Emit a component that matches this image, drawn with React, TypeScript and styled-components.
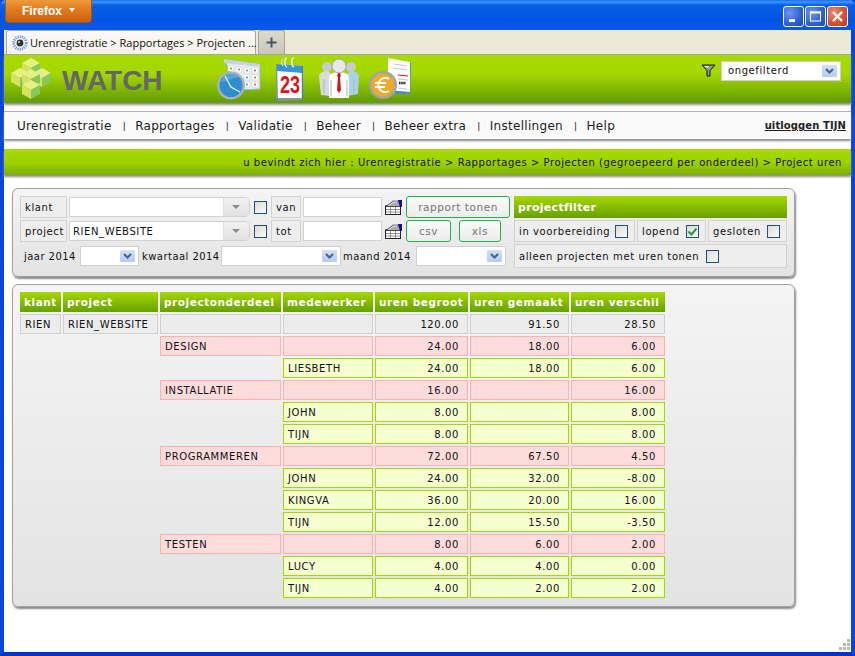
import React from 'react';
import styled, { createGlobalStyle } from 'styled-components';

const GlobalStyle = createGlobalStyle`
  html, body { margin: 0; padding: 0; height: 100%; overflow: hidden; background: #fff; }
  #root { height: 100%; }
  * { box-sizing: border-box; }
`;

const Window = styled.div`
  height: 656px;
  width: 855px;
  display: flex;
  flex-direction: column;
  border-left: 4px solid #0a45dc;
  border-right: 4px solid #0a45dc;
  border-bottom: 4px solid #0433c8;
  background: #fff;
  font-family: "DejaVu Sans", Verdana, sans-serif;
  color: #111;
  position: relative;
`;

const TitleBar = styled.div`
  height: 30px;
  margin: 0 -4px;
  flex: none;
  background: linear-gradient(#1a6cf0 0, #3d95ff 2px, #0a5fe8 5px, #0054e3 20px, #0a58e6 30px);
  border-radius: 6px 6px 0 0;
  display: flex;
  justify-content: space-between;
  padding: 0 7px 0 5px;
`;

const FirefoxButton = styled.div`
  width: 87px;
  height: 23px;
  background: linear-gradient(#f09a3a, #e27a1c 45%, #c9620f);
  border: 1px solid #a8550f;
  border-top: none;
  border-radius: 0 0 4px 4px;
  color: #fff;
  font: bold 12px "Liberation Sans", Arial, sans-serif;
  display: flex;
  align-items: center;
  justify-content: center;
  gap: 7px;
  padding-bottom: 1px;
  &::after {
    content: '';
    border: 3.5px solid transparent;
    border-top: 4px solid #fff;
    border-bottom: none;
    margin-top: -1px;
  }
`;

const WinButtons = styled.div`
  display: flex;
  gap: 1px;
  padding-top: 6px;
`;

const WinButton = styled.div<{ $close?: boolean }>`
  width: 21px;
  height: 21px;
  border: 1px solid #fff;
  border-radius: 3px;
  background: ${(p) =>
    p.$close
      ? 'radial-gradient(circle at 30% 30%, #e98a6f, #d4502e 60%, #bd3a17)'
      : 'radial-gradient(circle at 30% 30%, #6f96f0, #2d5fdc 60%, #1b46c6)'};
  display: flex;
  align-items: center;
  justify-content: center;
`;

const TabStrip = styled.div`
  height: 25px;
  flex: none;
  background: #ece9d8;
  display: flex;
  align-items: flex-end;
  padding-left: 2px;
  gap: 2px;
  border-bottom: 1px solid #a8a69c;
`;

const Tab = styled.div`
  width: 250px;
  height: 24px;
  background: linear-gradient(#fbfaf6, #f3f1e8);
  border: 1px solid #a8a69c;
  border-bottom: none;
  border-radius: 3px 3px 0 0;
  display: flex;
  align-items: center;
  gap: 2px;
  padding-left: 5px;
  font: 11px "Open Sans", "Liberation Sans", sans-serif;
  white-space: nowrap;
  svg { flex: none; }
`;

const NewTab = styled.div`
  width: 27px;
  height: 24px;
  background: linear-gradient(#dcdad0, #c9c7bc);
  border: 1px solid #a8a69c;
  border-bottom: none;
  border-radius: 3px 3px 0 0;
  display: flex;
  align-items: center;
  justify-content: center;
`;

const Header = styled.div`
  height: 48px;
  flex: none;
  background: linear-gradient(#a7da00 0, #a4d600 40%, #66a000 95%);
  box-shadow: 0 2px 2px #8d8d8d;
  display: flex;
  align-items: center;
  position: relative;
  padding-left: 6px;
`;

const LogoText = styled.div`
  font: bold 28px "Liberation Sans", Arial, sans-serif;
  color: #63666a;
  margin: 3px 0 0 10px;
  width: 100px;
  flex: none;
`;

const AppIcons = styled.div`
  display: flex;
  align-items: center;
  margin-left: 55px;
  gap: 14px;
`;

const PeopleSlot = styled.span`
  margin-left: 1px;
  margin-right: -5px;
  display: inline-flex;
`;

const FilterBox = styled.div`
  margin-left: auto;
  margin-right: 10px;
  margin-top: -17px;
  display: flex;
  align-items: center;
  gap: 5px;
`;

const Select = styled.div<{ $w: number; $mr?: number }>`
  width: ${(p) => p.$w}px;
  height: 20px;
  margin-right: ${(p) => p.$mr ?? 0}px;
  border: 1px solid #d0d0d0;
  background: #fff;
  display: flex;
  align-items: center;
  justify-content: space-between;
  padding: 0 3px 0 6px;
  font-size: 10px;
  letter-spacing: 0.6px;
  flex: none;
`;

const SelectArrow = styled.span`
  width: 15px;
  height: 12px;
  background: linear-gradient(#d3e0fa, #b6caf2);
  border-radius: 1px;
  display: flex;
  align-items: center;
  justify-content: center;
`;

const NavBar = styled.div`
  height: 28px;
  flex: none;
  margin-top: 8px;
  background: #fafafa;
  border-top: 1px solid #b0b0b0;
  box-shadow: 0 2px 2px #8d8d8d;
  display: flex;
  align-items: center;
  padding: 0 5px 0 13px;
  font-size: 12px;
`;

const NavItem = styled.a`
  color: #1a1a1a;
  white-space: nowrap;
  letter-spacing: 0.3px;
`;

const NavSep = styled.span`
  font-size: 9px;
  margin: 1px 9.5px 0 11px;
`;

const Logout = styled.a`
  margin-left: auto;
  font-size: 10px;
  font-weight: bold;
  letter-spacing: 0.1px;
  text-decoration: underline;
  color: #222;
`;

const Crumb = styled.div`
  height: 26px;
  flex: none;
  margin-top: 10px;
  background: linear-gradient(#a6d800, #a0d200 50%, #7cb000);
  box-shadow: 0 2px 2px #8d8d8d;
  font-size: 10px;
  letter-spacing: 0.55px;
  display: flex;
  align-items: center;
  justify-content: flex-end;
  padding-right: 9px;
`;

const Panel = styled.div<{ $h: number; $top: number }>`
  width: 783px;
  height: ${(p) => p.$h}px;
  margin: ${(p) => p.$top}px 0 0 8px;
  flex: none;
  border: 1px solid #a0a0a0;
  border-radius: 6px;
  background: linear-gradient(#f4f4f4, #e3e3e3);
  box-shadow: 1px 2px 2px #8a8a8a;
  padding: 7px;
  font-size: 10px;
  letter-spacing: 0.6px;
`;

const FilterLayout = styled.div`
  display: flex;
  gap: 4px;
`;

const FilterLeft = styled.div`
  width: 490px;
  display: flex;
  flex-direction: column;
  gap: 2px;
`;

const FilterRow = styled.div`
  height: 22px;
  display: flex;
  align-items: center;
`;

const YearRow = styled(FilterRow)`
  height: 20px;
  margin-top: 2px;
  padding-left: 4px;
  white-space: nowrap;
`;

const YearLabel = styled.span<{ $w: number }>`
  width: ${(p) => p.$w}px;
  flex: none;
  letter-spacing: 0.45px;
`;

const FieldLabel = styled.div<{ $w: number }>`
  width: ${(p) => p.$w}px;
  height: 22px;
  flex: none;
  border: 1px solid #d2d2d2;
  background: #eeeeee;
  display: flex;
  align-items: center;
  padding-left: 4px;
  margin-right: 2px;
`;

const Combo = styled.div`
  width: 181px;
  height: 20px;
  flex: none;
  border: 1px solid #d2d2d2;
  border-radius: 0 5px 5px 0;
  background: #fff;
  display: flex;
  align-items: center;
  padding-left: 3px;
  position: relative;
  &::after {
    content: '';
    position: absolute;
    right: 0;
    top: 0;
    bottom: 0;
    width: 25px;
    background: linear-gradient(#f0f0f0, #e2e2e2);
    border-left: 1px solid #dcdcdc;
    border-radius: 0 4px 4px 0;
  }
  &::before {
    content: '';
    position: absolute;
    right: 9px;
    top: 7px;
    border: 4px solid transparent;
    border-top: 4px solid #8c8c8c;
    border-bottom: none;
    z-index: 1;
  }
`;

const CheckBox = styled.span<{ $ml?: number; $mr?: number }>`
  width: 13px;
  height: 13px;
  flex: none;
  border: 1px solid #1c5180;
  background: linear-gradient(135deg, #dcdcd6, #fbfbf8);
  margin-left: ${(p) => p.$ml ?? 0}px;
  margin-right: ${(p) => p.$mr ?? 0}px;
  display: inline-flex;
  align-items: center;
  justify-content: center;
`;

const DateInput = styled.div`
  width: 79px;
  height: 20px;
  flex: none;
  border: 1px solid #d2d2d2;
  background: #fff;
`;

const CalendarSlot = styled.span`
  margin: 0 4px 0 3px;
  display: inline-flex;
  flex: none;
`;

const ActionButton = styled.div<{ $w: number; $mr?: number }>`
  width: ${(p) => p.$w}px;
  height: 22px;
  flex: none;
  margin-right: ${(p) => p.$mr ?? 0}px;
  border: 1px solid #22b14c;
  border-radius: 3px;
  background: linear-gradient(#fbfbfb, #ececec);
  color: #777;
  display: flex;
  align-items: center;
  justify-content: center;
  font-size: 10.5px;
  letter-spacing: 0.55px;
`;

const FilterRight = styled.div`
  width: 273px;
  display: flex;
  flex-direction: column;
  gap: 2px;
`;

const FilterTitle = styled.div`
  height: 22px;
  background: linear-gradient(#a6d800, #66a000);
  color: #fff;
  font-weight: bold;
  font-size: 11px;
  letter-spacing: 0.3px;
  display: flex;
  align-items: center;
  padding-left: 4px;
`;

const StatusRow = styled.div`
  display: flex;
  gap: 2px;
`;

const StatusCell = styled.div<{ $w: number; $h?: number }>`
  width: ${(p) => p.$w}px;
  height: ${(p) => p.$h ?? 22}px;
  border: 1px solid #d2d2d2;
  background: #eeeeee;
  display: flex;
  align-items: center;
  justify-content: space-between;
  padding: 0 6px 0 4px;
  white-space: nowrap;
`;

const OnlyHours = styled(StatusCell)`
  justify-content: flex-start;
  gap: 7px;
`;

const ReportTable = styled.table`
  border-collapse: separate;
  border-spacing: 2px;
  table-layout: fixed;
  width: 649px;
  margin: -2px 0 0 -2px;
`;

const Col = styled.col<{ $w: number }>`
  width: ${(p) => p.$w}px;
`;

const HeadCell = styled.th`
  height: 20px;
  padding: 0 4px;
  background: linear-gradient(#a6d800, #66a000);
  color: #fff;
  font-weight: bold;
  font-size: 10.5px;
  text-align: left;
  letter-spacing: 0.55px;
  white-space: nowrap;
  overflow: hidden;
`;

const palette = {
  sum: { bg: '#ececec', line: '#d0d0d0' },
  group: { bg: '#ffdcdc', line: '#ffb0b0' },
  item: { bg: '#f5ffd0', line: '#a6d800' },
};

const Cell = styled.td<{ $kind?: keyof typeof palette; $num?: boolean }>`
  height: 20px;
  padding: 0 ${(p) => (p.$num ? '8px' : '4px')} 0 4px;
  background: ${(p) => (p.$kind ? palette[p.$kind].bg : 'transparent')};
  border: ${(p) => (p.$kind ? `1px solid ${palette[p.$kind].line}` : 'none')};
  text-align: ${(p) => (p.$num ? 'right' : 'left')};
  white-space: nowrap;
`;

const ResizeGrip = styled.svg`
  position: absolute;
  right: 1px;
  bottom: 2px;
`;

const columns = [41, 95, 121, 90, 93, 99, 94];
const headings = ['klant', 'project', 'projectonderdeel', 'medewerker', 'uren begroot', 'uren gemaakt', 'uren verschil'];

type Row = { kind: 'group' | 'item'; group?: string; person?: string; a: string; b: string; c: string };

const rows: Row[] = [
  { kind: 'group', group: 'DESIGN', a: '24.00', b: '18.00', c: '6.00' },
  { kind: 'item', person: 'LIESBETH', a: '24.00', b: '18.00', c: '6.00' },
  { kind: 'group', group: 'INSTALLATIE', a: '16.00', b: '', c: '16.00' },
  { kind: 'item', person: 'JOHN', a: '8.00', b: '', c: '8.00' },
  { kind: 'item', person: 'TIJN', a: '8.00', b: '', c: '8.00' },
  { kind: 'group', group: 'PROGRAMMEREN', a: '72.00', b: '67.50', c: '4.50' },
  { kind: 'item', person: 'JOHN', a: '24.00', b: '32.00', c: '-8.00' },
  { kind: 'item', person: 'KINGVA', a: '36.00', b: '20.00', c: '16.00' },
  { kind: 'item', person: 'TIJN', a: '12.00', b: '15.50', c: '-3.50' },
  { kind: 'group', group: 'TESTEN', a: '8.00', b: '6.00', c: '2.00' },
  { kind: 'item', person: 'LUCY', a: '4.00', b: '4.00', c: '0.00' },
  { kind: 'item', person: 'TIJN', a: '4.00', b: '2.00', c: '2.00' },
];

const ChevronDown = () => (
  <svg width="9" height="6" viewBox="0 0 9 6">
    <path d="M1 1l3.5 3.5L8 1" fill="none" stroke="#4d6185" strokeWidth="2" />
  </svg>
);

const CalendarIcon = () => (
  <svg width="17" height="15" viewBox="0 0 17 15">
    <rect x="0.5" y="6.5" width="15" height="8" fill="#fff" stroke="#222" />
    <path d="M1 9.5h14M1 12h14M5.5 7v7M10.5 7v7" stroke="#777" strokeWidth="0.8" />
    <path d="M1 6.5L8 1h5l3 5.5z" fill="#a8a8a8" stroke="#444" strokeWidth="0.7" />
    <path d="M4 5.5l5-3.5h3" fill="none" stroke="#e4e4e4" />
    <path d="M13 0h4v7h-2z" fill="#10108a" />
    <path d="M0 5.5h3L1 7H0z" fill="#10108a" />
  </svg>
);

// back to front, so the lower cubes overlap the upper ones
const logoCubes = [
  [20, 5], [9, 15], [31, 15], [20, 16], [20, 27],
];

const Logo = () => (
  <svg width="42" height="42" viewBox="0 0 40 42">
    {logoCubes.map(([x, y]) => (
      <g key={`${x}-${y}`}>
        <path d={`M${x - 9} ${y}l9-5 9 5-9 5z`} fill="#e7f086" />
        <path d={`M${x - 9} ${y}v9l9 5v-9z`} fill="#d3e45e" />
        <path d={`M${x + 9} ${y}v9l-9 5v-9z`} fill="#86c95a" />
      </g>
    ))}
  </svg>
);

const ClockIcon = () => (
  <svg width="44" height="42" viewBox="0 0 44 42">
    <path d="M7 1l36 5v25l-22 1z" fill="#e9eef0" stroke="#8fb8d0" strokeWidth="1" />
    <path d="M7 1l36 5v3L7 5z" fill="#c9d3d8" />
    <g fill="#fff" stroke="#c4ced3" strokeWidth="0.5">
      <rect x="11" y="8" width="6" height="5" /><rect x="19" y="9" width="6" height="5" />
      <rect x="27" y="10" width="6" height="5" /><rect x="35" y="10" width="6" height="5" />
      <rect x="27" y="17" width="6" height="5" /><rect x="35" y="17" width="6" height="5" />
      <rect x="27" y="24" width="6" height="5" /><rect x="35" y="24" width="6" height="5" />
    </g>
    <g fill="#3aa655"><circle cx="14" cy="10.5" r="1" /><circle cx="22" cy="11.5" r="1" /><circle cx="30" cy="12.5" r="1" /><circle cx="30" cy="19.5" r="1" /><circle cx="30" cy="26.5" r="1" /></g>
    <g fill="#d94a4a"><circle cx="38" cy="12.5" r="1" /><circle cx="38" cy="19.5" r="1" /><circle cx="38" cy="26.5" r="1" /></g>
    <circle cx="14" cy="27.5" r="14" fill="#a9b2b7" />
    <circle cx="14" cy="27.5" r="11.5" fill="#2d8ed0" />
    <path d="M4 24a11 11 0 0 1 18-5z" fill="#4fa8e0" />
    <path d="M8 18l6 11 9 5" fill="none" stroke="#f2f7fa" strokeWidth="1.2" />
  </svg>
);

const DateIcon = () => (
  <svg width="29" height="44" viewBox="0 0 29 44">
    <path d="M1 7l27 2-1 34-22 1-4-2z" fill="#7f95a6" />
    <path d="M2 7l26 2v32L3 41z" fill="#fff" />
    <path d="M2 7l26 2v7L2 14z" fill="#3a92d8" />
    <path d="M28 9v32h-1.2V9z" fill="#2f86c8" />
    <path d="M12 1c-3 0-3 8 0 9M19 1c-3 0-3 8 0 9" fill="none" stroke="#e8f2f8" strokeWidth="1.4" />
    <path d="M8 2c-2 1-2 5 0 7" fill="none" stroke="#e8f2f8" strokeWidth="1" />
    <text transform="translate(15 36) scale(1 1.3)" textAnchor="middle" fontFamily="'Liberation Sans', Arial, sans-serif" fontWeight="bold" fontSize="18" fill="#d9141a">23</text>
  </svg>
);

const PeopleIcon = () => (
  <svg width="40" height="42" viewBox="0 0 40 42">
    <circle cx="8" cy="9" r="5" fill="#c9ccce" />
    <circle cx="32" cy="9" r="5" fill="#c9ccce" />
    <path d="M0 18c1-4 5-5 9-5l3 3v22l-10-1z" fill="#d8dbdd" />
    <path d="M40 18c-1-4-5-5-9-5l-3 3v22l11-2z" fill="#a9d2ea" />
    <path d="M10 20c0-4 5-6 10-6s10 2 10 6v20H10z" fill="#fff" />
    <circle cx="20" cy="8" r="7" fill="#e6e8ea" stroke="#a5a8aa" strokeWidth="1" />
    <path d="M19 15h2l1 3-1 1 1 13-2 3-2-3 1-13-1-1z" fill="#d8141a" />
    <path d="M5 21v15M35 21v15M12 22v16M28 22v16" stroke="#b0b4b6" strokeWidth="1" />
  </svg>
);

const EuroIcon = () => (
  <svg width="44" height="42" viewBox="0 0 44 42">
    <path d="M21 1l22 4-1 31-22-1z" fill="#3a92c8" />
    <path d="M20 0l22 4v30l-22-2z" fill="#fff" />
    <path d="M26 6l13 2M25 10l14 2M30 21l10 1M30 30l9 1" stroke="#c3c6c8" strokeWidth="1" />
    <path d="M30 17l10 1" stroke="#d8141a" strokeWidth="1" />
    <path d="M31 25h7" stroke="#222" strokeWidth="2.5" strokeDasharray="1.5 .7" />
    <circle cx="15" cy="27" r="14" fill="#9fa5a8" />
    <circle cx="15" cy="27" r="11.5" fill="#efa92d" />
    <path d="M21 21a7 7 0 1 0 0 12M7 25h11M7 29h10" fill="none" stroke="#fff" strokeWidth="2" />
  </svg>
);

const Favicon = () => (
  <svg width="16" height="16" viewBox="0 0 16 16">
    <rect width="16" height="16" fill="#f3f5fb" />
    <circle cx="8" cy="8" r="6.3" fill="none" stroke="#6d9ad8" strokeWidth="2.8" strokeDasharray="1.2 1" />
    <circle cx="8" cy="8" r="3.4" fill="#333" />
    <circle cx="7" cy="7" r="1" fill="#ddd" />
  </svg>
);

const Funnel = () => (
  <svg width="15" height="13" viewBox="0 0 15 13">
    <path d="M1 1h13L9 6.5V12H6V6.5z" fill="#9a9a9a" stroke="#111" strokeWidth="1" />
    <path d="M3 2h5L6.5 4z" fill="#e8e8e8" />
  </svg>
);

const Tick = () => (
  <svg width="11" height="9" viewBox="0 0 11 9">
    <path d="M1.5 4.5l3 3 5-6" fill="none" stroke="#1f9e3a" strokeWidth="2" />
  </svg>
);

const navItems = ['Urenregistratie', 'Rapportages', 'Validatie', 'Beheer', 'Beheer extra', 'Instellingen', 'Help'];

const App = () => (
  <Window>
    <GlobalStyle />
    <TitleBar>
      <FirefoxButton>Firefox</FirefoxButton>
      <WinButtons>
        <WinButton>
          <svg width="13" height="13" viewBox="0 0 13 13"><rect x="2" y="9" width="6" height="3" fill="#fff" /></svg>
        </WinButton>
        <WinButton>
          <svg width="13" height="13" viewBox="0 0 13 13"><rect x="1.5" y="2" width="10" height="9" fill="none" stroke="#fff" /><rect x="1" y="1.5" width="11" height="2" fill="#fff" /></svg>
        </WinButton>
        <WinButton $close>
          <svg width="13" height="13" viewBox="0 0 13 13"><path d="M2 2l9 9M11 2l-9 9" stroke="#fff" strokeWidth="2.4" /></svg>
        </WinButton>
      </WinButtons>
    </TitleBar>
    <TabStrip>
      <Tab>
        <Favicon />
        Urenregistratie &gt; Rapportages &gt; Projecten ...
      </Tab>
      <NewTab>
        <svg width="13" height="13" viewBox="0 0 13 13"><path d="M6.5 1.5v10M1.5 6.5h10" stroke="#4a5560" strokeWidth="2" /></svg>
      </NewTab>
    </TabStrip>
    <Header>
      <Logo />
      <LogoText>WATCH</LogoText>
      <AppIcons>
        <ClockIcon />
        <DateIcon />
        <PeopleSlot><PeopleIcon /></PeopleSlot>
        <EuroIcon />
      </AppIcons>
      <FilterBox>
        <Funnel />
        <Select $w={120}>
          ongefilterd
          <SelectArrow><ChevronDown /></SelectArrow>
        </Select>
      </FilterBox>
    </Header>
    <NavBar>
      {navItems.map((item, i) => (
        <React.Fragment key={item}>
          {i > 0 && <NavSep>|</NavSep>}
          <NavItem>{item}</NavItem>
        </React.Fragment>
      ))}
      <Logout>uitloggen TIJN</Logout>
    </NavBar>
    <Crumb>u bevindt zich hier : Urenregistratie &gt; Rapportages &gt; Projecten (gegroepeerd per onderdeel) &gt; Project uren</Crumb>

    <Panel $h={89} $top={13}>
      <FilterLayout>
        <FilterLeft>
          <FilterRow>
            <FieldLabel $w={47}>klant</FieldLabel>
            <Combo />
            <CheckBox $ml={4} $mr={4} />
            <FieldLabel $w={30}>van</FieldLabel>
            <DateInput />
            <CalendarSlot><CalendarIcon /></CalendarSlot>
            <ActionButton $w={104}>rapport tonen</ActionButton>
          </FilterRow>
          <FilterRow>
            <FieldLabel $w={47}>project</FieldLabel>
            <Combo>RIEN_WEBSITE</Combo>
            <CheckBox $ml={4} $mr={4} />
            <FieldLabel $w={30}>tot</FieldLabel>
            <DateInput />
            <CalendarSlot><CalendarIcon /></CalendarSlot>
            <ActionButton $w={45} $mr={8}>csv</ActionButton>
            <ActionButton $w={42}>xls</ActionButton>
          </FilterRow>
          <YearRow>
            <YearLabel $w={56}>jaar 2014</YearLabel>
            <Select $w={59} $mr={3}><span /><SelectArrow><ChevronDown /></SelectArrow></Select>
            <YearLabel $w={79}>kwartaal 2014</YearLabel>
            <Select $w={120} $mr={2}><span /><SelectArrow><ChevronDown /></SelectArrow></Select>
            <YearLabel $w={73}>maand 2014</YearLabel>
            <Select $w={90}><span /><SelectArrow><ChevronDown /></SelectArrow></Select>
          </YearRow>
        </FilterLeft>
        <FilterRight>
          <FilterTitle>projectfilter</FilterTitle>
          <StatusRow>
            <StatusCell $w={121}>in voorbereiding <CheckBox /></StatusCell>
            <StatusCell $w={69}>lopend <CheckBox><Tick /></CheckBox></StatusCell>
            <StatusCell $w={79}>gesloten <CheckBox /></StatusCell>
          </StatusRow>
          <OnlyHours $w={273} $h={24}>alleen projecten met uren tonen <CheckBox /></OnlyHours>
        </FilterRight>
      </FilterLayout>
    </Panel>

    <Panel $h={323} $top={7}>
      <ReportTable>
        <colgroup>
          {columns.map((w, i) => <Col key={i} $w={w} />)}
        </colgroup>
        <thead>
          <tr>{headings.map((h) => <HeadCell key={h}>{h}</HeadCell>)}</tr>
        </thead>
        <tbody>
          <tr>
            <Cell $kind="sum">RIEN</Cell>
            <Cell $kind="sum">RIEN_WEBSITE</Cell>
            <Cell $kind="sum" />
            <Cell $kind="sum" />
            <Cell $kind="sum" $num>120.00</Cell>
            <Cell $kind="sum" $num>91.50</Cell>
            <Cell $kind="sum" $num>28.50</Cell>
          </tr>
          {rows.map((r, i) => (
            <tr key={i}>
              <Cell />
              <Cell />
              {r.kind === 'group' ? <Cell $kind="group">{r.group}</Cell> : <Cell />}
              <Cell $kind={r.kind}>{r.person}</Cell>
              <Cell $kind={r.kind} $num>{r.a}</Cell>
              <Cell $kind={r.kind} $num>{r.b}</Cell>
              <Cell $kind={r.kind} $num>{r.c}</Cell>
            </tr>
          ))}
        </tbody>
      </ReportTable>
    </Panel>
    <ResizeGrip width="11" height="11" viewBox="0 0 11 11">
      <path d="M8 0h3v3H8zM4 4h3v3H4zM8 4h3v3H8zM0 8h3v3H0zM4 8h3v3H4zM8 8h3v3H8z" fill="#bdb8a8" />
    </ResizeGrip>
  </Window>
);

export default App;
